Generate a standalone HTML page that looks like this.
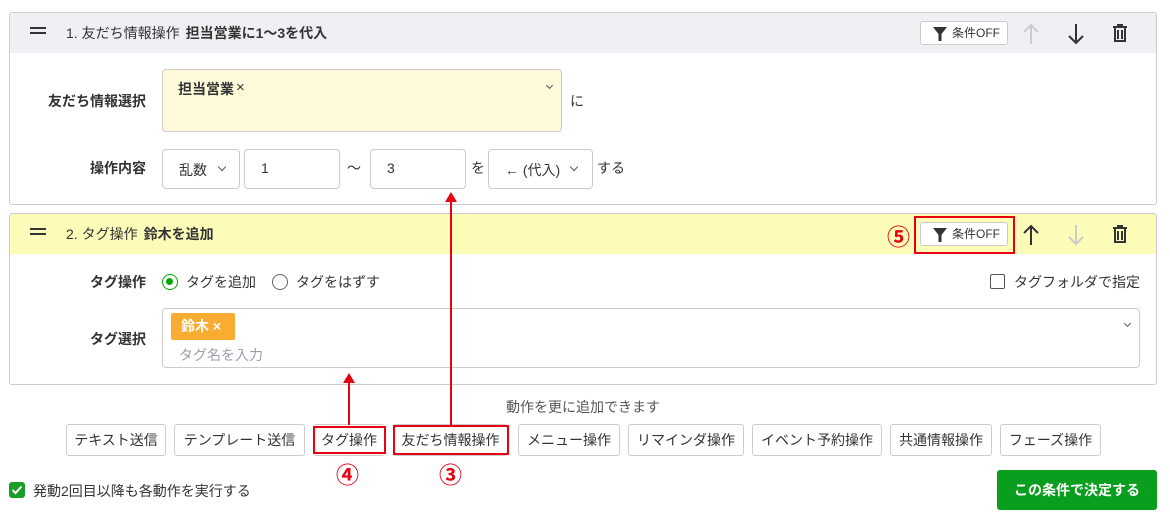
<!DOCTYPE html>
<html><head><meta charset="utf-8"><style>
*{box-sizing:border-box;margin:0;padding:0}
body{width:1170px;height:520px;background:#fff;font-family:"Liberation Sans","Noto Sans CJK JP",sans-serif;color:#333;font-size:14px;position:relative;overflow:hidden}
.a{position:absolute}
.panel{position:absolute;left:9px;width:1148px;border:1px solid #ccc;border-radius:3px;background:#fff}
.hdr{height:40px;border-radius:3px 3px 0 0;position:relative}
.ham{position:absolute;left:20px;top:14px;width:16px;height:7px;border-top:2px solid #333;border-bottom:2px solid #333}
.ttl{position:absolute;left:56px;top:10px;font-size:14px}
.ttl b{margin-left:6px}
.cbtn{position:absolute;width:88px;height:24px;border:1px solid #ccc;border-radius:3px;background:#fff;font-size:12px;line-height:22px;padding-left:31px}
.cbtn svg{position:absolute;left:12px;top:5px}
.lbl{position:absolute;font-weight:bold;font-size:14px;text-align:right;width:136px;left:0}
.box{position:absolute;border:1px solid #ccc;border-radius:4px;background:#fff;font-size:14px}
.btn{position:absolute;top:424px;height:32px;border:1px solid #ccc;border-radius:3px;font-size:14px;line-height:30px;text-align:center;background:#fff}
.red{position:absolute;border:2px solid #e60012}
.num{position:absolute;color:#e60012;font-size:23px;font-weight:bold}
.chev{position:absolute;width:6px;height:6px;border-right:1.5px solid #555;border-bottom:1.5px solid #555;transform:rotate(45deg)}
</style></head><body>

<div class="panel" style="top:12px;height:193px">
 <div class="hdr" style="background:#f0f0f4"><div class="ham"></div><div class="ttl">1. 友だち情報操作<b>担当営業に1〜3を代入</b></div>
  <div class="cbtn" style="left:910px;top:8px"><svg width="14" height="14" viewBox="0 0 14 14"><path d="M0 0H14L8.5 7V14H5.5V7Z" fill="#333"/></svg>条件OFF</div>
  <svg class="a" style="left:1013px;top:10px" width="16" height="22" viewBox="0 0 16 22"><path d="M8 21V2M1 9L8 2L15 9" stroke="#ccc" stroke-width="2" fill="none"/></svg>
  <svg class="a" style="left:1058px;top:10px" width="16" height="22" viewBox="0 0 16 22"><path d="M8 1V20M1 13L8 20L15 13" stroke="#333" stroke-width="2" fill="none"/></svg>
  <svg class="a" style="left:1103px;top:11px" width="14" height="18" viewBox="0 0 14 18"><path d="M0 3H14M5 3V1H9V3M2 4V17H12V4M5 6V15M9 6V15" stroke="#333" stroke-width="2" fill="none"/></svg>
 </div>
 <div class="lbl" style="top:78px">友だち情報選択</div>
 <div class="box" style="left:152px;top:56px;width:400px;height:63px;background:#fdf9d9;border-color:#ccc"><b style="position:absolute;left:15px;top:9px">担当営業</b><span style="position:absolute;left:73px;top:9px;font-size:15px">×</span><div class="chev" style="left:384px;top:13px;width:5px;height:5px"></div></div>
 <div class="a" style="left:560px;top:78px">に</div>
 <div class="lbl" style="top:145px">操作内容</div>
 <div class="box" style="left:152px;top:136px;width:78px;height:40px"><span class="a" style="left:16px;top:10px">乱数</span><div class="chev" style="left:56px;top:14px"></div></div>
 <div class="box" style="left:234px;top:136px;width:96px;height:40px"><span class="a" style="left:16px;top:10px">1</span></div>
 <div class="a" style="left:337px;top:145px">〜</div>
 <div class="box" style="left:360px;top:136px;width:96px;height:40px"><span class="a" style="left:16px;top:10px">3</span></div>
 <div class="a" style="left:461px;top:145px">を</div>
 <div class="box" style="left:478px;top:136px;width:105px;height:40px"><span class="a" style="left:16px;top:10px">← (代入)</span><div class="chev" style="left:82px;top:14px"></div></div>
 <div class="a" style="left:587px;top:145px">する</div>
</div>

<div class="panel" style="top:213px;height:172px">
 <div class="hdr" style="background:#fdfbb8"><div class="ham"></div><div class="ttl">2. タグ操作<b>鈴木を追加</b></div>
  <div class="cbtn" style="left:910px;top:8px"><svg width="14" height="14" viewBox="0 0 14 14"><path d="M0 0H14L8.5 7V14H5.5V7Z" fill="#333"/></svg>条件OFF</div>
  <svg class="a" style="left:1013px;top:10px" width="16" height="22" viewBox="0 0 16 22"><path d="M8 21V2M1 9L8 2L15 9" stroke="#333" stroke-width="2" fill="none"/></svg>
  <svg class="a" style="left:1058px;top:10px" width="16" height="22" viewBox="0 0 16 22"><path d="M8 1V20M1 13L8 20L15 13" stroke="#ccc" stroke-width="2" fill="none"/></svg>
  <svg class="a" style="left:1103px;top:11px" width="14" height="18" viewBox="0 0 14 18"><path d="M0 3H14M5 3V1H9V3M2 4V17H12V4M5 6V15M9 6V15" stroke="#333" stroke-width="2" fill="none"/></svg>
 </div>
 <div class="lbl" style="top:58px">タグ操作</div>
 <div class="a" style="left:152px;top:60px;width:16px;height:16px;border:1.5px solid #0a0;border-radius:50%"><div class="a" style="left:3px;top:3px;width:7px;height:7px;background:#0a0;border-radius:50%"></div></div>
 <div class="a" style="left:176px;top:58px">タグを追加</div>
 <div class="a" style="left:262px;top:60px;width:16px;height:16px;border:1.5px solid #666;border-radius:50%"></div>
 <div class="a" style="left:286px;top:58px">タグをはずす</div>
 <div class="a" style="left:980px;top:60px;width:15px;height:15px;border:1.5px solid #555;border-radius:2px"></div>
 <div class="a" style="left:1004px;top:58px">タグフォルダで指定</div>
 <div class="lbl" style="top:115px">タグ選択</div>
 <div class="box" style="left:152px;top:94px;width:978px;height:60px"><div class="a" style="left:8px;top:4px;width:64px;height:27px;background:#f8ad32;border-radius:2px;color:#fff;font-weight:bold;line-height:27px;padding-left:10px">鈴木 ×</div><span class="a" style="left:16px;top:36px;color:#9aa0aa">タグ名を入力</span><div class="chev" style="left:962px;top:12px;width:5px;height:5px"></div></div>
</div>

<div class="a" style="left:506px;top:397px;color:#555">動作を更に追加できます</div>
<div class="btn" style="left:66px;width:100px">テキスト送信</div>
<div class="btn" style="left:174px;width:131px">テンプレート送信</div>
<div class="btn" style="left:313px;width:72px">タグ操作</div>
<div class="btn" style="left:393px;width:115px">友だち情報操作</div>
<div class="btn" style="left:518px;width:102px">メニュー操作</div>
<div class="btn" style="left:628px;width:116px">リマインダ操作</div>
<div class="btn" style="left:752px;width:130px">イベント予約操作</div>
<div class="btn" style="left:890px;width:102px">共通情報操作</div>
<div class="btn" style="left:1000px;width:101px">フェーズ操作</div>

<div class="red" style="left:313px;top:426px;width:73px;height:28px"></div>
<div class="red" style="left:393px;top:425px;width:116px;height:30px"></div>
<div class="red" style="left:914px;top:216px;width:101px;height:38px"></div>
<div class="num" style="left:887px;top:218px">⑤</div>
<div class="num" style="left:336px;top:456px">④</div>
<div class="num" style="left:439px;top:456px">③</div>
<div class="a" style="left:348px;top:382px;width:2px;height:43px;background:#e60012"></div>
<svg class="a" style="left:343px;top:373px" width="12" height="10"><path d="M6 0L12 10H0Z" fill="#e60012"/></svg>
<div class="a" style="left:450px;top:200px;width:2px;height:225px;background:#e60012"></div>
<svg class="a" style="left:445px;top:192px" width="12" height="10"><path d="M6 0L12 10H0Z" fill="#e60012"/></svg>

<div class="a" style="left:9px;top:482px;width:16px;height:16px;background:#1a9e28;border-radius:3px"><svg width="16" height="16"><path d="M3.5 8L6.5 11L12.5 4.5" stroke="#fff" stroke-width="2" fill="none"/></svg></div>
<div class="a" style="left:33px;top:481px">発動2回目以降も各動作を実行する</div>
<div class="a" style="left:997px;top:470px;width:160px;height:40px;background:#0a9e1e;border-radius:3px;color:#fff;font-weight:bold;text-align:center;line-height:40px">この条件で決定する</div>
</body></html>
